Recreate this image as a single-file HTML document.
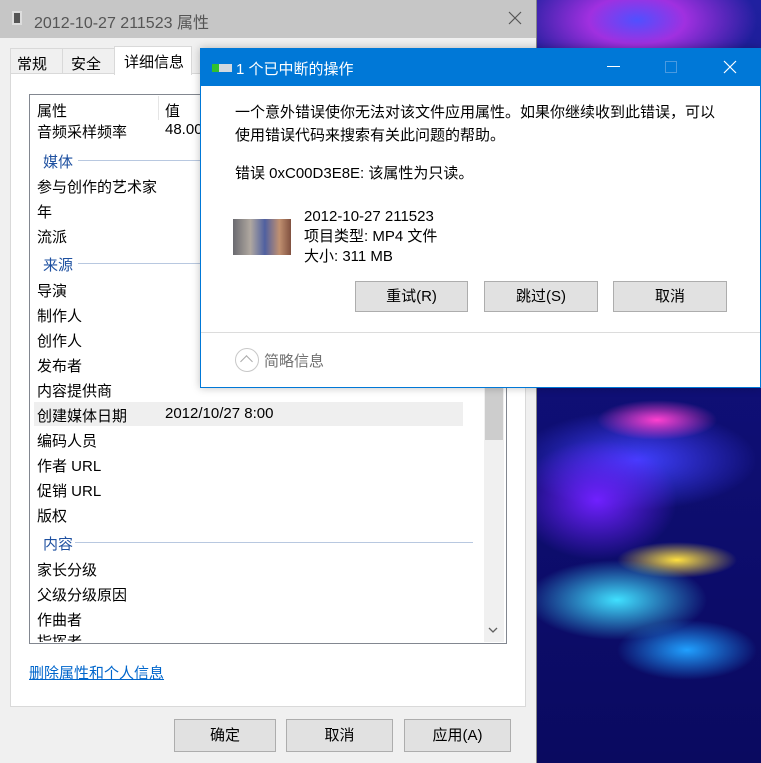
<!DOCTYPE html>
<html><head><meta charset="utf-8"><style>
*{margin:0;padding:0;box-sizing:border-box}
body{width:761px;height:763px;overflow:hidden;position:relative;background:#f0f0f0;font-family:"Liberation Sans","Noto Sans CJK SC",sans-serif;font-size:14px;color:#000}
.a{position:absolute;white-space:nowrap}
.wall{position:absolute;left:537px;top:0;width:224px;height:763px;background:
radial-gradient(ellipse 60px 20px at 120px 420px,#ff40d0 0%,transparent 100%),
radial-gradient(ellipse 90px 40px at 80px 600px,#40e0ff 0%,transparent 100%),
radial-gradient(ellipse 70px 30px at 150px 650px,#20a0ff 0%,transparent 100%),
radial-gradient(ellipse 100px 30px at 140px 560px,#ffe040 0%,transparent 60%),
radial-gradient(ellipse 80px 60px at 60px 500px,#7020ff 0%,transparent 100%),
radial-gradient(ellipse 120px 50px at 100px 460px,#4040ff 0%,transparent 100%),
radial-gradient(ellipse 120px 60px at 100px 20px,#5050ff 0%,#a030e0 40%,transparent 100%),
linear-gradient(#2020a0,#10107a 40%,#0a0a60 100%)}
.row{position:absolute;left:37px;font-size:15px}
.grp{position:absolute;left:43px;color:#1e50a0;font-size:15px}
.line{position:absolute;height:1px;background:#b8c8e0}
.btn{position:absolute;background:#e1e1e1;border:1px solid #adadad;text-align:center;font-size:15px}
</style></head><body>
<div class="wall"></div>
<div class="a" style="left:0;top:0;width:537px;height:38px;background:#c6c6c6"></div>
<div class="a" style="left:12px;top:11px;width:10px;height:14px;background:#555;border:2px solid #ddd"></div>
<div class="a" style="left:34px;top:9px;font-size:16px;color:#555">2012-10-27 211523 属性</div>
<svg class="a" style="left:508px;top:11px" width="14" height="14"><path d="M1 1L13 13M13 1L1 13" stroke="#555" stroke-width="1.2"/></svg>
<div class="a" style="left:0;top:38px;width:537px;height:725px;background:#f0f0f0"></div>
<div class="a" style="left:536px;top:0;width:1px;height:763px;background:#888"></div>
<div class="a" style="left:10px;top:48px;width:53px;height:26px;border:1px solid #d9d9d9;border-bottom:none;padding:4px 6px;font-size:15px">常规</div>
<div class="a" style="left:62px;top:48px;width:53px;height:26px;border:1px solid #d9d9d9;border-bottom:none;padding:4px 8px;font-size:15px">安全</div>
<div class="a" style="left:10px;top:73px;width:516px;height:634px;background:#fff;border:1px solid #d9d9d9"></div>
<div class="a" style="left:114px;top:46px;width:78px;height:29px;background:#fff;border:1px solid #d9d9d9;border-bottom:none;padding:4px 9px;font-size:15px">详细信息</div>
<div class="a" style="left:29px;top:94px;width:478px;height:550px;border:1px solid #828790;background:#fff"></div>
<div class="a" style="left:158px;top:96px;width:1px;height:24px;background:#e5e5e5"></div>
<div class="row" style="top:100px">属性</div><div class="row" style="left:165px;top:100px">值</div>
<div class="row" style="top:121px">音频采样频率</div><div class="row" style="left:165px;top:121px">48.00</div>
<div class="grp" style="top:151px">媒体</div><div class="line" style="left:78px;top:160px;width:130px"></div>
<div class="row" style="top:176px">参与创作的艺术家</div>
<div class="row" style="top:201px">年</div>
<div class="row" style="top:226px">流派</div>
<div class="grp" style="top:254px">来源</div><div class="line" style="left:78px;top:263px;width:130px"></div>
<div class="row" style="top:280px">导演</div>
<div class="row" style="top:305px">制作人</div>
<div class="row" style="top:330px">创作人</div>
<div class="row" style="top:355px">发布者</div>
<div class="row" style="top:380px">内容提供商</div>
<div class="a" style="left:34px;top:402px;width:429px;height:24px;background:#efefef"></div>
<div class="row" style="top:405px">创建媒体日期</div><div class="row" style="left:165px;top:405px">2012/10/27 8:00</div>
<div class="row" style="top:430px">编码人员</div>
<div class="row" style="top:455px">作者 URL</div>
<div class="row" style="top:480px">促销 URL</div>
<div class="row" style="top:505px">版权</div>
<div class="grp" style="top:533px">内容</div><div class="line" style="left:75px;top:542px;width:398px"></div>
<div class="row" style="top:559px">家长分级</div>
<div class="row" style="top:584px">父级分级原因</div>
<div class="row" style="top:609px">作曲者</div>
<div class="a" style="left:37px;top:632px;height:10px;overflow:hidden;font-size:15px;line-height:22px">指挥者</div>
<div class="a" style="left:484px;top:95px;width:20px;height:547px;background:#f0f0f0"></div>
<div class="a" style="left:485px;top:300px;width:18px;height:140px;background:#cdcdcd"></div>
<svg class="a" style="left:488px;top:627px" width="10" height="7"><path d="M1 1L5 5L9 1" stroke="#606060" stroke-width="1.3" fill="none"/></svg>
<div class="a" style="left:29px;top:662px;color:#0066cc;text-decoration:underline;font-size:15px">删除属性和个人信息</div>
<div class="btn" style="left:174px;top:719px;width:102px;height:33px;line-height:31px">确定</div>
<div class="btn" style="left:286px;top:719px;width:107px;height:33px;line-height:31px">取消</div>
<div class="btn" style="left:404px;top:719px;width:107px;height:33px;line-height:31px">应用(A)</div>
<div class="a" style="left:200px;top:48px;width:561px;height:340px;background:#fff;border:1px solid #0078d7;box-shadow:0 0 8px rgba(0,0,0,.25)"></div>
<div class="a" style="left:200px;top:48px;width:561px;height:38px;background:#0078d7"></div>
<div class="a" style="left:212px;top:64px;width:20px;height:8px;background:#d0d8e0"></div>
<div class="a" style="left:212px;top:64px;width:7px;height:8px;background:#30c030"></div>
<div class="a" style="left:236px;top:58px;font-size:15px;color:#fff">1 个已中断的操作</div>
<div class="a" style="left:607px;top:66px;width:13px;height:1px;background:#fff"></div>
<div class="a" style="left:665px;top:61px;width:12px;height:12px;border:1px solid #4a9ae0"></div>
<svg class="a" style="left:723px;top:60px" width="14" height="14"><path d="M1 1L13 13M13 1L1 13" stroke="#fff" stroke-width="1.2"/></svg>
<div class="a" style="left:235px;top:101px;line-height:23px;font-size:15px">一个意外错误使你无法对该文件应用属性。如果你继续收到此错误，可以<br>使用错误代码来搜索有关此问题的帮助。</div>
<div class="a" style="left:235px;top:162px;font-size:15px">错误 0xC00D3E8E: 该属性为只读。</div>
<div class="a" style="left:233px;top:219px;width:58px;height:36px;background:linear-gradient(90deg,#6a6a70,#b0a8a0 30%,#5060a0 55%,#c09070 80%,#805040)"></div>
<div class="a" style="left:304px;top:207px;line-height:20px;font-size:15px">2012-10-27 211523<br>项目类型: MP4 文件<br>大小: 311 MB</div>
<div class="btn" style="left:355px;top:281px;width:113px;height:31px;line-height:29px">重试(R)</div>
<div class="btn" style="left:484px;top:281px;width:114px;height:31px;line-height:29px">跳过(S)</div>
<div class="btn" style="left:613px;top:281px;width:114px;height:31px;line-height:29px">取消</div>
<div class="a" style="left:201px;top:332px;width:559px;height:1px;background:#dcdcdc"></div>
<div class="a" style="left:235px;top:348px;width:24px;height:24px;border:1px solid #c8c8c8;border-radius:50%"></div>
<div class="a" style="left:242px;top:357px;width:9px;height:9px;border-left:1px solid #aaa;border-top:1px solid #aaa;transform:rotate(45deg)"></div>
<div class="a" style="left:264px;top:350px;color:#707070;font-size:15px">简略信息</div>
</body></html>
